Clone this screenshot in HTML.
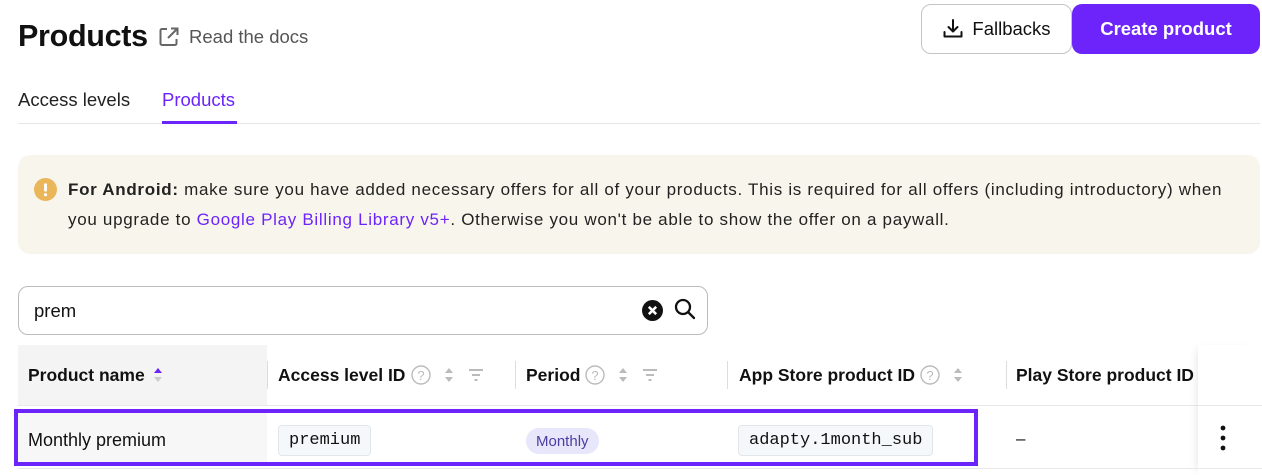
<!DOCTYPE html>
<html><head><meta charset="utf-8"><style>
*{box-sizing:border-box;margin:0;padding:0}
body{width:1262px;height:475px;overflow:hidden;background:#fff;font-family:"Liberation Sans",sans-serif;color:#111;position:relative}
.abs{position:absolute}
.title{left:18px;top:19px;font-size:30.5px;font-weight:bold;letter-spacing:-0.3px}
.docs{left:189px;top:26px;font-size:18.5px;color:#555}
.btn1{left:921px;top:4px;width:151px;height:50px;border:1px solid #c4c4c4;border-radius:10px;font-size:18.5px;display:flex;align-items:center;justify-content:center;gap:8px}
.btn2{left:1072px;top:4px;width:188px;height:50px;background:#6c24fb;border-radius:10px;color:#fff;font-size:18.5px;font-weight:bold;display:flex;align-items:center;justify-content:center}
.tab{top:89px;font-size:18.5px}
.banner{left:18px;top:155px;width:1242px;height:99px;background:#f8f6ec;border-radius:12px}
.btext{left:68px;top:175px;font-size:17px;letter-spacing:0.7px;line-height:30px;color:#222;width:1190px;white-space:nowrap}
.search{left:18px;top:286px;width:690px;height:49px;border:1px solid #bbb;border-radius:10px}
.th{top:365px;font-size:17.5px;font-weight:bold}
.sep{width:1px;height:28px;background:#ddd;top:361px}
.code{font-family:"Liberation Mono",monospace;font-size:17px;background:#f5f8fa;border:1px solid #e2e6ea;border-radius:4px;height:31px;display:flex;align-items:center;padding:0 10px;top:425px}
</style></head><body>
<div class="abs title">Products</div>
<svg class="abs" style="left:158px;top:26px" width="22" height="22" viewBox="0 0 22 22" fill="none" stroke="#666" stroke-width="2"><path d="M9 3H4a1.5 1.5 0 0 0-1.5 1.5v13A1.5 1.5 0 0 0 4 19h13a1.5 1.5 0 0 0 1.5-1.5V13"/><path d="M13 2.5h6.5V9M19.5 2.5 10 12"/></svg>
<div class="abs docs">Read the docs</div>
<div class="abs btn1"><svg width="22" height="22" viewBox="0 0 22 22" fill="none" stroke="#111" stroke-width="2" stroke-linecap="round" stroke-linejoin="round"><path d="M11 2v11M6.5 9l4.5 4.5L15.5 9M2.5 14v4.5h17V14"/></svg>Fallbacks</div>
<div class="abs btn2">Create product</div>
<div class="abs tab" style="left:18px;color:#222">Access levels</div>
<div class="abs tab" style="left:162px;color:#6c24fb">Products</div>
<div class="abs" style="left:18px;top:123px;width:1242px;height:1px;background:#e6e6e6"></div>
<div class="abs" style="left:162px;top:121px;width:75px;height:3px;background:#6c24fb"></div>
<div class="abs banner"></div>
<svg class="abs" style="left:34px;top:178px" width="23" height="23" viewBox="0 0 22 22"><circle cx="11" cy="11" r="11" fill="#ebb55a"/><rect x="9.6" y="5" width="2.8" height="8" rx="1.4" fill="#fff"/><circle cx="11" cy="16" r="1.5" fill="#fff"/></svg>
<div class="abs btext"><b>For Android:</b> make sure you have added necessary offers for all of your products. This is required for all offers (including introductory) when<br>you upgrade to <span style="color:#6c24fb">Google Play Billing Library v5+</span>. Otherwise you won't be able to show the offer on a paywall.</div>
<div class="abs search"></div>
<div class="abs" style="left:34px;top:300px;font-size:18.5px">prem</div>
<svg class="abs" style="left:642px;top:300px" width="21" height="21" viewBox="0 0 20 20"><circle cx="10" cy="10" r="10" fill="#111"/><path d="M6.5 6.5l7 7M13.5 6.5l-7 7" stroke="#fff" stroke-width="2.4"/></svg>
<svg class="abs" style="left:673px;top:297px" width="24" height="24" viewBox="0 0 24 24" fill="none" stroke="#111" stroke-width="2.3" stroke-linecap="round"><circle cx="10" cy="10" r="7"/><path d="M15 15l6 6"/></svg>
<div class="abs" style="left:18px;top:345px;width:249px;height:61px;background:#f4f4f4"></div>
<div class="abs" style="left:18px;top:405px;width:1244px;height:1px;background:#e8e8e8"></div>
<div class="abs" style="left:1198px;top:345px;width:64px;height:130px;background:#fff;box-shadow:-6px 0 8px -4px rgba(0,0,0,0.08)"></div>
<div class="abs" style="left:1198px;top:405px;width:64px;height:1px;background:#e8e8e8"></div>
<div class="abs th" style="left:28px">Product name</div>
<svg class="abs" style="left:153px;top:366px" width="10" height="18" viewBox="0 0 10 18"><path d="M1 7l4-5 4 5z" fill="#6c24fb"/><path d="M1 11l4 5 4-5z" fill="#ccc"/></svg>
<div class="abs sep" style="left:267px"></div>
<div class="abs th" style="left:278px">Access level ID</div>
<div class="abs sep" style="left:515px"></div>
<div class="abs th" style="left:526px">Period</div>
<div class="abs sep" style="left:727px"></div>
<div class="abs th" style="left:739px">App Store product ID</div>
<div class="abs sep" style="left:1006px"></div>
<div class="abs th" style="left:1016px">Play Store product ID</div>
<svg class="abs" width="0" height="0"><defs><g id="q"><circle cx="10" cy="10" r="9" fill="none" stroke="#bbb" stroke-width="1.4"/><text x="10" y="15" text-anchor="middle" font-size="13" fill="#bbb" font-family="Liberation Sans">?</text></g><g id="s"><path d="M1 8l4-5 4 5z M1 12l4 5 4-5z" fill="#bbb"/></g><g id="f"><path d="M1 5h14M4 10h8M6.5 15h3" stroke="#bbb" stroke-width="2"/></g></defs></svg>
<svg class="abs" style="left:411px;top:365px" width="80" height="20"><use href="#q"/><use href="#s" x="33"/><use href="#f" x="57"/></svg>
<svg class="abs" style="left:585px;top:365px" width="80" height="20"><use href="#q"/><use href="#s" x="33"/><use href="#f" x="57"/></svg>
<svg class="abs" style="left:920px;top:365px" width="50" height="20"><use href="#q"/><use href="#s" x="33"/></svg>
<div class="abs" style="left:18px;top:412px;width:249px;height:52px;background:#f7f7f7"></div>
<div class="abs" style="left:18px;top:468px;width:1244px;height:1px;background:#e8e8e8"></div>
<div class="abs" style="left:28px;top:430px;font-size:18px">Monthly premium</div>
<div class="abs code" style="left:278px">premium</div>
<div class="abs" style="left:526px;top:428px;height:26px;padding:0 10px;border-radius:13px;background:#e8e6fb;color:#4a3fa0;font-size:15px;display:flex;align-items:center">Monthly</div>
<div class="abs code" style="left:738px">adapty.1month_sub</div>
<div class="abs" style="left:1016px;top:429px;font-size:17px">–</div>
<svg class="abs" style="left:1218px;top:424px" width="10" height="28"><circle cx="5" cy="4" r="2.4" fill="#111"/><circle cx="5" cy="14" r="2.4" fill="#111"/><circle cx="5" cy="24" r="2.4" fill="#111"/></svg>
<div class="abs" style="left:14px;top:409px;width:964px;height:57px;border:4px solid #6c24fb"></div>
</body></html>
